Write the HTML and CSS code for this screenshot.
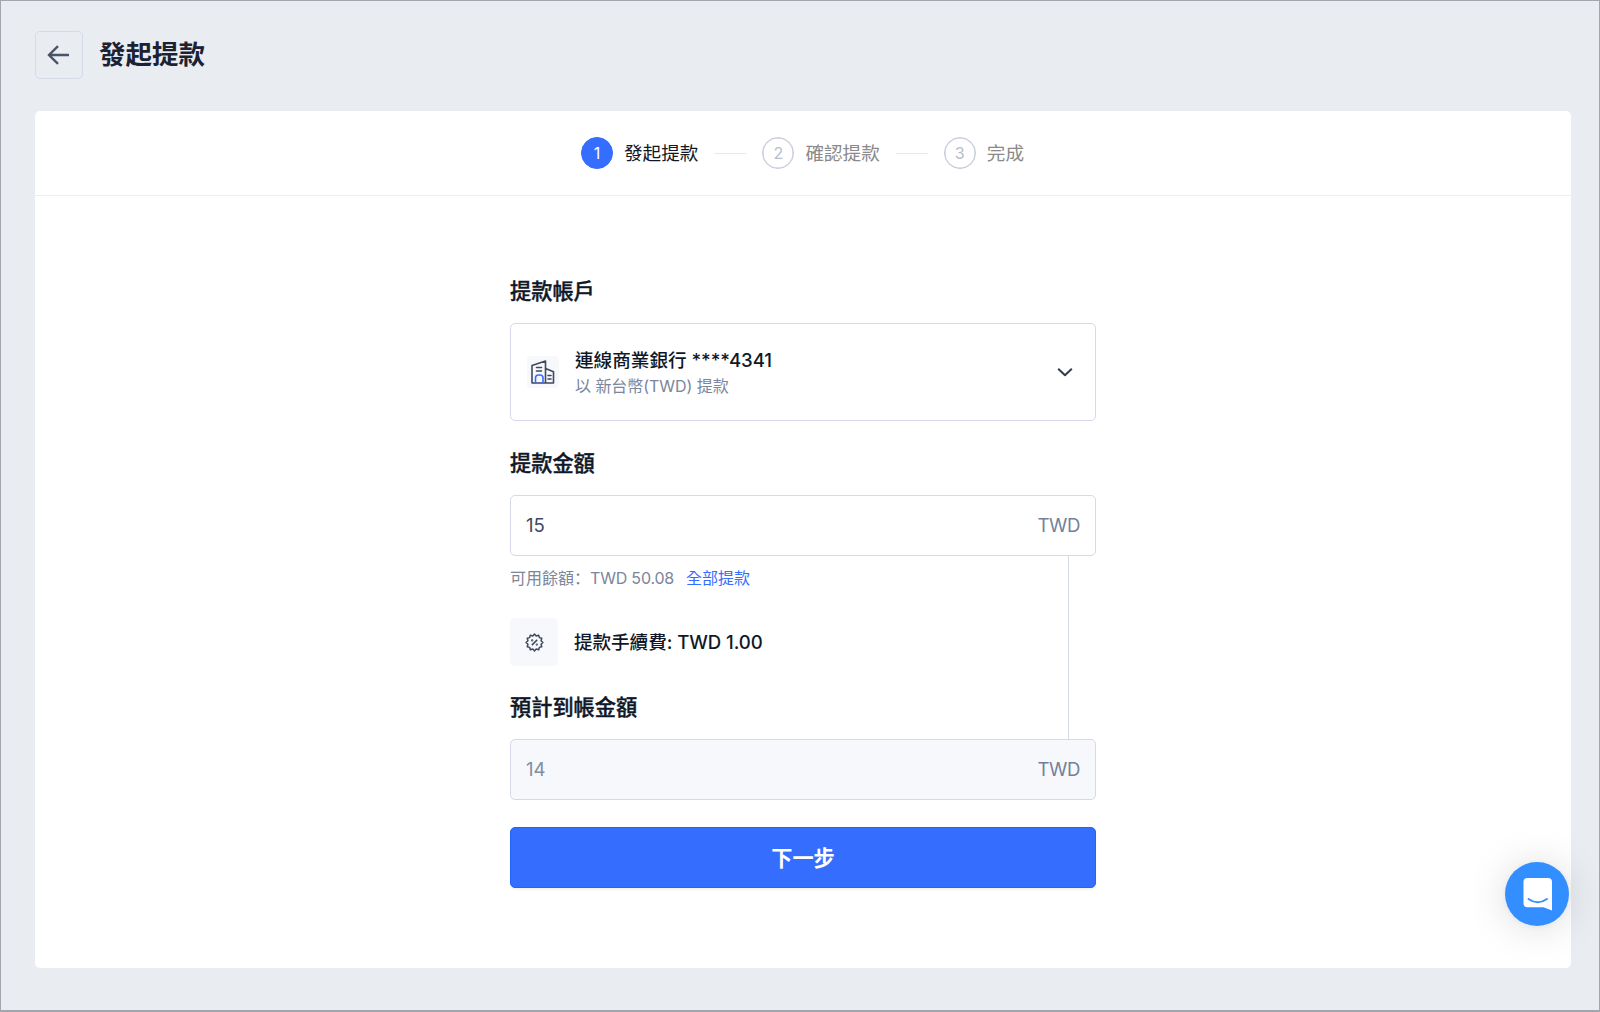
FILE: index.html
```html
<!DOCTYPE html>
<html lang="zh-Hant">
<head>
    <meta charset="UTF-8">
    <meta name="viewport" content="width=device-width, initial-scale=1.0">
    <title>發起提款</title>
    <link rel="stylesheet" href="styles.css">
</head>
<body>
    <div class="page">
        <header class="page-header">
            <button type="button" class="back-btn" aria-label="返回">
                <svg width="24" height="24" viewBox="0 0 24 24" fill="none" stroke="#4a5468" stroke-width="2.4">
                    <path d="M22 12H2M11 3.200L2 12l9 8.800"/>
                </svg>
            </button>
            <h1>發起提款</h1>
        </header>

        <main class="card">
            <div class="steps">
                <div class="step active">
                    <span class="step-num">1</span>
                    <span class="step-name">發起提款</span>
                </div>
                <span class="step-line"></span>
                <div class="step">
                    <span class="step-num">2</span>
                    <span class="step-name">確認提款</span>
                </div>
                <span class="step-line"></span>
                <div class="step">
                    <span class="step-num">3</span>
                    <span class="step-name">完成</span>
                </div>
            </div>

            <form class="withdraw-form">
                <div class="label">提款帳戶</div>
                <div class="account-select">
                    <span class="bank-icon">
                        <svg width="32" height="32" viewBox="0 0 32 32" fill="none" stroke="#3f4a5f" stroke-width="1.6" stroke-linejoin="round" stroke-linecap="round">
                            <path d="M5 27V9.500L18.500 5v22M18.500 12.500l8 3.300V27M5 27h21.500"/>
                            <path d="M9.500 11.500h5M9.500 15h5M21 19.500h3M21 23h3"/>
                            <path stroke="#356dff" d="M8.500 27v-5q0-3 3-3h1.500q3 0 3 3v5"/>
                        </svg>
                    </span>
                    <div class="account-info">
                        <div class="account-name">連線商業銀行 <span class="card-no">****4341</span></div>
                        <div class="account-desc">以 新台幣(TWD) 提款</div>
                    </div>
                    <svg class="arrow" width="16" height="16" viewBox="0 0 16 16" fill="none" stroke="#333d50" stroke-width="2" stroke-linejoin="round">
                        <path d="M1.200 4.700L8 11.300l6.800-6.600"/>
                    </svg>
                </div>

                <div class="label">提款金額</div>
                <div class="amount">
                    <span class="value">15</span>
                    <span class="unit">TWD</span>
                </div>

                <div class="between">
                    <div class="between-content">
                        <div class="balance">
                            <span>可用餘額<span class="colon" lang="zh-Hans">：</span></span>
                            <span class="balance-value">TWD 50.08</span>
                            <a class="all">全部提款</a>
                        </div>
                        <div class="fee">
                            <span class="fee-icon">
                                <svg width="19" height="19" viewBox="0 0 18 18" fill="none" stroke="#3f4a5f" stroke-width="1.4" stroke-linejoin="round">
                                    <path d="M9 1L10.600 2.800L13 2.100L13.600 4.400L15.900 5L15.200 7.400L17 9L15.200 10.600L15.900 13L13.600 13.600L13 15.900L10.600 15.200L9 17L7.400 15.200L5 15.900L4.400 13.600L2.100 13L2.800 10.600L1 9L2.800 7.400L2.100 5L4.400 4.400L5 2.100L7.400 2.800Z"/>
                                    <path d="M6.500 11.500l5-5"/>
                                    <circle cx="6.800" cy="7" r=".4"/>
                                    <circle cx="11.200" cy="11" r=".4"/>
                                </svg>
                            </span>
                            <span class="fee-text">提款手續費: TWD 1.00</span>
                        </div>
                        <div class="label">預計到帳金額</div>
                    </div>
                    <span class="link-line"></span>
                </div>

                <div class="amount disabled">
                    <span class="value">14</span>
                    <span class="unit">TWD</span>
                </div>

                <button type="button" class="next-btn">下一步</button>
            </form>
        </main>

        <!-- 右下角客服 -->
        <div class="chat-launcher">
            <svg width="30" height="34" viewBox="0 0 30 34">
                <path fill="#fff" d="M4.500 1h20.500a4 4 0 0 1 4 4v28.500l-8.500-3.200H4.500a4 4 0 0 1-4-4V5a4 4 0 0 1 4-4z"/>
                <path fill="none" stroke="#338fff" stroke-width="1.900" stroke-linecap="round" d="M5.500 22q9 6.500 18.500 0"/>
            </svg>
        </div>
    </div>
</body>
</html>
```

FILE: styles.css
```css
* {
    box-sizing: border-box;
}
body {
    margin: 0;
    font-family: Inter, "Noto Sans CJK TC", sans-serif;
    color: #101828;
    background-color: #e9edf2;
}
.page {
    height: 1012px;
    padding: 30px 28px 0 34px;
    border: 1px solid #a3a6ac;
    border-width: 1px 1px 2px 1px;
    overflow: hidden;
}

/* 顶部标题 */
.page-header {
    display: flex;
    align-items: center;
    height: 48px;
    margin-bottom: 32px;
}
.back-btn {
    display: flex;
    align-items: center;
    justify-content: center;
    width: 48px;
    height: 48px;
    padding: 0;
    background: none;
    border: 1px solid #d5dae8;
    border-radius: 5px;
}
h1 {
    margin: 0 0 0 16px;
    font-size: 26.5px;
    font-weight: 700;
    line-height: 46px;
    padding-bottom: 2px;
    color: #1c2233;
}

.card {
    width: 1536px;
    height: 857px;
    background-color: #fff;
    border-radius: 5px;
}

/* 步骤条 */
.steps {
    display: flex;
    align-items: center;
    justify-content: center;
    height: 85px;
    padding-right: 1px;
    border-bottom: 1px solid #eceef1;
}
.step {
    display: flex;
    align-items: center;
}
.step-num {
    width: 32px;
    height: 32px;
    margin-right: 11px;
    border: 1.5px solid #c3c9da;
    box-shadow: inset 0 0 0 0.5px #c3c9da;
    border-radius: 50%;
    font-size: 16px;
    line-height: 30px;
    text-align: center;
    color: #b5bccd;
}
.step-name {
    font-size: 18.6px;
    line-height: 32px;
    color: #8a8a8a;
}
.step.active .step-num {
    background-color: #356dff;
    border-color: #356dff;
    box-shadow: none;
    color: #fff;
}
.step.active .step-name {
    color: #101828;
}
.step-line {
    width: 32px;
    height: 1px;
    margin: 0 16px;
    background-color: #e8e8ea;
}

/* 表单 */
.withdraw-form {
    width: 586px;
    margin: 0 auto;
    padding-top: 79px;
}
.label {
    height: 32px;
    margin-bottom: 16px;
    font-size: 21.2px;
    font-weight: 500;
    line-height: 32px;
    -webkit-text-stroke: 0.4px #101828;
}
.account-select {
    display: flex;
    align-items: center;
    height: 98px;
    margin-bottom: 26px;
    padding: 0 22px 0 16px;
    border: 1px solid #d5d9e9;
    border-radius: 5px;
}
.bank-icon {
    width: 32px;
    height: 32px;
    background-color: #f6f8fc;
    border-radius: 4px;
}
.account-info {
    flex: 1;
    margin-left: 16px;
}
.account-name {
    font-size: 18.6px;
    font-weight: 500;
    line-height: 28px;
}
.card-no {
    letter-spacing: -0.1px;
}
.account-desc {
    font-size: 16px;
    line-height: 24px;
    letter-spacing: -0.05px;
    color: #7b859b;
}
.amount {
    display: flex;
    align-items: center;
    justify-content: space-between;
    height: 61px;
    padding: 0 15px 2px;
    border: 1px solid #d5d9e9;
    border-radius: 5px;
    font-size: 18.6px;
    color: #3f4a5f;
}
.unit {
    letter-spacing: -0.4px;
    color: #74809a;
}
.amount.disabled {
    background-color: #f6f8fc;
    color: #848ea3;
}

/* 两个金额框之间的内容和连接线 */
.between {
    display: flex;
    height: 183px;
}
.between-content {
    flex: 1;
}
.link-line {
    width: 1px;
    margin-right: 27px;
    background-color: #d5d9e9;
}
.balance {
    display: flex;
    height: 28px;
    margin-top: 8px;
    font-size: 16px;
    line-height: 28px;
    color: #7b859b;
}
/* 冒号靠左下 */
.colon {
    font-family: "Noto Sans CJK SC", sans-serif;
    line-height: 1;
}
.balance-value {
    letter-spacing: -0.2px;
}
.all {
    margin-left: 12px;
    color: #356dff;
}
.fee {
    display: flex;
    align-items: center;
    margin: 26px 0 25px;
}
.fee-icon {
    display: flex;
    align-items: center;
    justify-content: center;
    width: 48px;
    height: 48px;
    background-color: #f6f8fc;
    border-radius: 5px;
}
.fee-text {
    margin-left: 16px;
    padding-bottom: 4px;
    font-size: 18.6px;
    font-weight: 500;
    letter-spacing: -0.06px;
}
.next-btn {
    display: block;
    width: 100%;
    height: 61px;
    margin-top: 27px;
    padding: 0 0 2px;
    background-color: #356dff;
    border: 1px solid #2563f5;
    border-radius: 5px;
    box-shadow: 0 2px 2px rgba(0, 0, 0, 0.05);
    font-family: inherit;
    font-size: 21.2px;
    font-weight: 700;
    color: #fff;
}

.chat-launcher {
    position: fixed;
    right: 31px;
    bottom: 86px;
    display: flex;
    align-items: center;
    justify-content: center;
    width: 64px;
    height: 64px;
    padding: 0 0 1px 1px;
    background-color: #338fff;
    border-radius: 50%;
    box-shadow: 0 1px 8px rgba(0, 0, 0, 0.06), 0 2px 42px rgba(0, 0, 0, 0.14);
}
```
